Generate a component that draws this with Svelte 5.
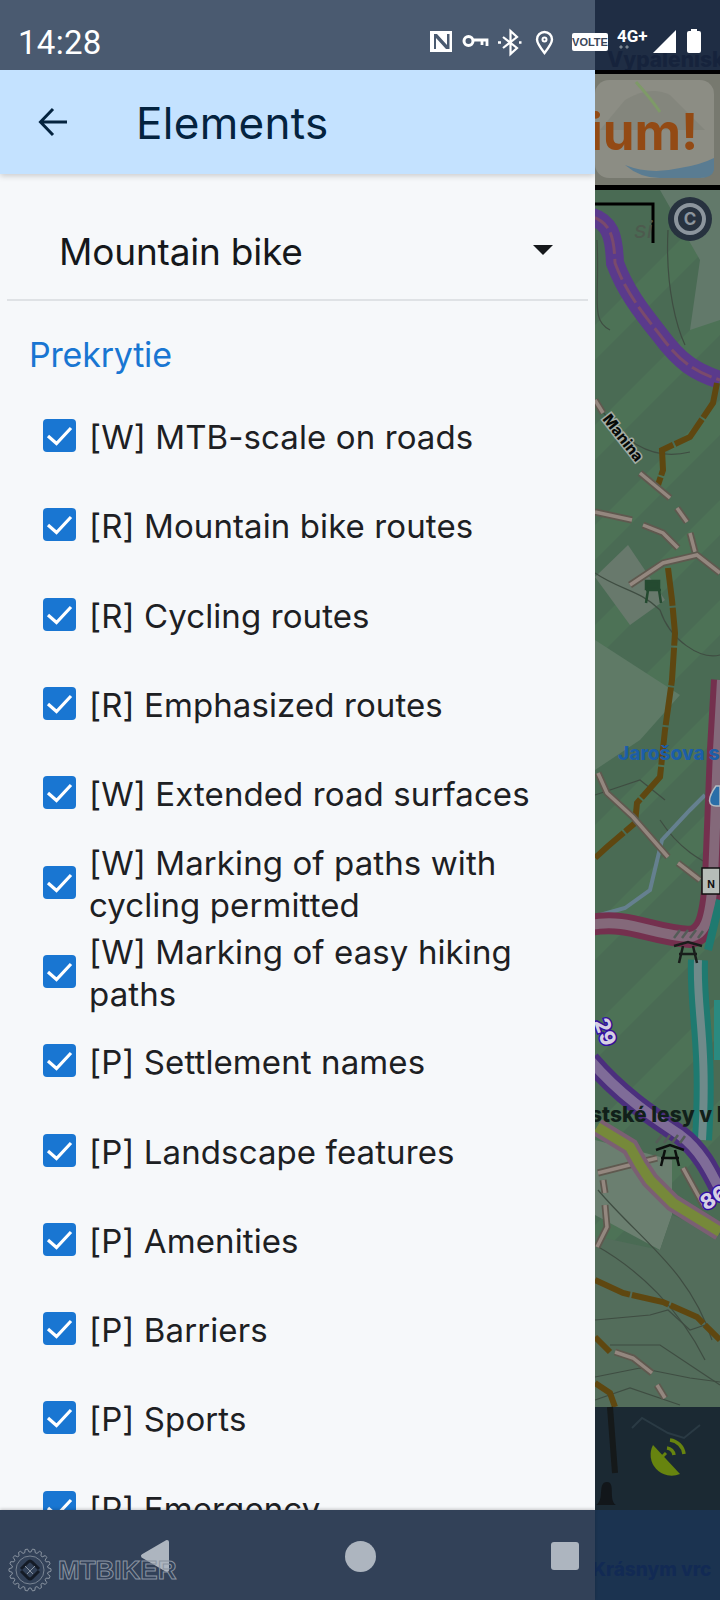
<script lang="ts">
	const items = [
		'[W] MTB-scale on roads',
		'[R] Mountain bike routes',
		'[R] Cycling routes',
		'[R] Emphasized routes',
		'[W] Extended road surfaces',
		'[W] Marking of paths with cycling permitted',
		'[W] Marking of easy hiking paths',
		'[P] Settlement names',
		'[P] Landscape features',
		'[P] Amenities',
		'[P] Barriers',
		'[P] Sports',
		'[P] Emergency'
	];

	const stripes = [200, 300, 400, 500, 600, 700, 800, 900, 1000, 1100];

	const tracks = [
		'M595 400 L603 413',
		'M640 473 L670 498',
		'M677 508 L687 522',
		'M690 533 L695 552',
		'M595 512 L632 520',
		'M643 525 L663 533 L678 548',
		'M630 585 L663 563 L697 555 L720 573',
		'M598 773 L607 793 L633 817 L668 857',
		'M678 863 L700 880',
		'M598 1173 L657 1158',
		'M603 1180 L605 1193',
		'M605 1205 L607 1227 L597 1247',
		'M615 1352 L633 1358 L652 1373',
		'M657 1385 L665 1398',
		'M683 1168 L705 1208'
	];

	const browns = [
		'M717 383 L713 403 L690 437 L662 450 L663 470 L658 485',
		'M668 568 L672 600 L675 633 L672 680 L665 730 L660 777 L637 803 L635 823 L607 847 L595 858',
		'M595 1280 L623 1293 L663 1302 L697 1317 L720 1340',
		'M595 1337 L610 1352',
		'M595 1383 L610 1393 L615 1407'
	];

	const contours = [
		'M595 400 C620 440 650 462 690 452',
		'M597 240 C600 300 590 320 610 330',
		'M668 230 C665 290 678 330 685 345',
		'M595 573 C620 590 640 590 660 610 C670 640 700 660 720 655',
		'M595 795 L610 790 L640 780 L665 800',
		'M660 820 C680 850 700 860 720 870',
		'M598 1190 C640 1240 690 1270 712 1340',
		'M595 1245 C640 1270 680 1310 705 1360',
		'M595 1320 L650 1315 L668 1310 L690 1330 L705 1325',
		'M610 1345 L660 1345 L720 1385',
		'M595 1377 L640 1368 L690 1378 L720 1382',
		'M595 1400 L630 1388 L680 1405'
	];

	// gear outline for the watermark
	function gearPath(cx: number, cy: number, outer: number, inner: number, teeth: number): string {
		const pts: string[] = [];
		const step = (Math.PI * 2) / teeth;
		for (let i = 0; i < teeth; i++) {
			const a = i * step;
			const seq: [number, number][] = [
				[inner, a - step * 0.36],
				[outer, a - step * 0.16],
				[outer, a + step * 0.16],
				[inner, a + step * 0.36]
			];
			for (const [r, t] of seq) {
				pts.push(`${(cx + r * Math.cos(t)).toFixed(1)} ${(cy + r * Math.sin(t)).toFixed(1)}`);
			}
		}
		return 'M' + pts.join(' L') + ' Z';
	}
</script>

<div class="screen">
	<svg class="map" viewBox="0 0 720 1600" width="720" height="1600">
		<rect width="720" height="1600" fill="#4a6b54" />
		{#each stripes as y}
			<path d="M590 {y + 130} L720 {y} L720 {y + 35} L590 {y + 165} Z" fill="#4d7256" />
		{/each}
		<path d="M660 190 L720 190 L720 320 L690 330 L700 260 Z" fill="#62796a" />
		<path d="M595 577 L628 545 L665 600 L630 625 Z" fill="#68796c" />
		<path d="M595 640 L680 695 L640 740 L595 770 Z" fill="#5f7a66" />
		<path d="M595 1140 L672 1160 L672 1215 L660 1250 L595 1215 Z" fill="#6b7f70" />
		<path d="M672 1215 L720 1235 L720 1410 L590 1410 L590 1235 L660 1250 Z" fill="#536d5b" />

		{#each contours as d}
			<path {d} fill="none" stroke="#3f4d42" stroke-width="1.2" />
		{/each}

		<rect width="720" height="70" fill="#1f2d44" />
		<text class="place-lg" x="607" y="67" fill="#16233c">Vypálenisko</text>
		<rect y="70" width="720" height="4" fill="#000" />
		<rect y="74" width="720" height="111" fill="#77796f" />
		<rect x="595" y="80" width="119" height="98" rx="14" fill="#8c8d84" />
		<path d="M625 100 Q650 85 670 95 L705 130 L600 130 Z" fill="#84867d" />
		<path d="M636 82 Q652 100 660 112" fill="none" stroke="#7e9a68" stroke-width="3" />
		<text class="ad" x="589" y="150" fill="#934a14">ium!</text>
		<path d="M625 165 Q650 175 680 168 Q700 165 714 158 V170 Q712 178 700 178 H660 Q640 178 625 165 Z" fill="#5a7c92" />
		<rect y="185" width="720" height="5" fill="#000" />
		<path d="M590 204 H653 V243" fill="none" stroke="#000" stroke-width="3" />
		<text class="faint" x="634" y="238" fill="#4d5a4e">si</text>
		<circle cx="690" cy="219" r="22" fill="#27323f" />
		<circle cx="690" cy="219" r="14" fill="none" stroke="#8c959d" stroke-width="4" />
		<text class="copy" x="690" y="225" text-anchor="middle" fill="#8c959d">C</text>

		<path d="M590 216 C610 222 614 235 615 263 C625 290 640 310 660 335 C680 362 695 372 720 380" fill="none" stroke="#5a3a8c" stroke-width="18" />
		<path d="M590 216 C610 222 614 235 615 263 C625 290 640 310 660 335 C680 362 695 372 720 380" fill="none" stroke="#7a4a6c" stroke-width="3" stroke-dasharray="22 5" />

		<path d="M600 915 L625 908 L650 890 L662 840 L690 810 L705 795" fill="none" stroke="#65808f" stroke-width="4" />

		{#each browns as d}
			<path {d} fill="none" stroke="#5f4710" stroke-width="6" stroke-dasharray="38 2" />
		{/each}
		{#each tracks as d}
			<path {d} fill="none" stroke="#5f594f" stroke-width="7" />
			<path {d} fill="none" stroke="#94877f" stroke-width="3.5" />
		{/each}

		<path d="M590 925 C630 918 650 935 690 937 C705 935 710 920 713 880 L718 750 L722 680" fill="none" stroke="#74304e" stroke-width="22" />
		<path d="M590 925 C630 918 650 935 690 937 C705 935 710 920 713 880 L718 750 L722 680" fill="none" stroke="#84697a" stroke-width="10" />
		<path d="M698 960 C696 1010 708 1040 702 1140" fill="none" stroke="#1f7a70" stroke-width="20" />
		<path d="M698 960 C696 1010 708 1040 702 1140" fill="none" stroke="#6f8a8a" stroke-width="8" />
		<path d="M708 950 L720 900" fill="none" stroke="#1f7a70" stroke-width="8" />
		<path d="M718 1000 V1060" fill="none" stroke="#2a8a80" stroke-width="8" />

		<path d="M590 1060 C620 1095 650 1115 680 1135 C700 1150 710 1170 720 1190" fill="none" stroke="#4b2f7d" stroke-width="20" />
		<path d="M590 1060 C620 1095 650 1115 680 1135 C700 1150 710 1170 720 1190" fill="none" stroke="#7f6c98" stroke-width="10" />
		<path d="M597 1127 L630 1147 L640 1165 L650 1180 L673 1203 L720 1232" fill="none" stroke="#7b5f73" stroke-width="18" />
		<path d="M597 1127 L630 1147 L640 1165 L650 1180 L673 1203 L720 1232" fill="none" stroke="#76893a" stroke-width="10" />

		<g transform="translate(623 438) rotate(52)">
			<text class="label" text-anchor="middle" y="5" fill="#070a08" stroke="#a3aca4" stroke-width="3">Manina</text>
		</g>
		<text class="place lake" x="618" y="760" fill="#1c5ea8">Jarošova s</text>
		<text class="place" x="590" y="1122" fill="#11201a">stské lesy v K</text>
		<g transform="translate(605 1032) rotate(70)">
			<text class="route" text-anchor="middle" y="7" fill="#d6d0e4" stroke="#3410a0" stroke-width="3">29</text>
		</g>
		<g transform="translate(714 1198) rotate(-30)">
			<text class="route" text-anchor="middle" y="7" fill="#d6d0e4" stroke="#3410a0" stroke-width="3">86</text>
		</g>

		<path d="M716 786 C706 800 709 806 716 806 L720 806 L720 786 Z" fill="#2a6ea8" stroke="#b4bcc2" stroke-width="1.5" />
		<rect x="702" y="868" width="18" height="26" fill="#b6bdb8" stroke="#111" stroke-width="1.5" />
		<text class="sign" x="711" y="888" text-anchor="middle" fill="#111">N</text>

		<g transform="translate(688 950)" fill="none" stroke="#191d1b" stroke-width="2.5">
			<path d="M-14 -4 L0 -8 L14 -4 M-9 4 H9 M-5 -4 L-9 13 M5 -4 L9 13" />
			<path d="M-14 -12 L-8 -20 M-6 -12 L0 -20 M2 -12 L8 -20 M10 -12 L15 -19" stroke="#545c58" />
		</g>
		<g transform="translate(670 1155)" fill="none" stroke="#0c0f0e" stroke-width="2.5">
			<path d="M-14 -5 L0 -10 L14 -5 M-9 3 H9 M-5 -5 L-9 11 M5 -5 L9 11" />
			<path d="M-14 -12 L-8 -20 M-6 -12 L0 -20 M2 -12 L8 -20 M10 -12 L15 -19" stroke="#545c58" />
		</g>
		<g transform="translate(654 592)" stroke="#244a30" stroke-width="2.5" fill="none">
			<rect x="-8" y="-11" width="13" height="8" fill="#244a30" />
			<path d="M-8 -2 H7 M-6 -2 L-8 11 M5 -2 L7 11" />
		</g>

		<rect y="1407" width="720" height="103" fill="#1b2933" />
		<path d="M610 1407 L615 1473" fill="none" stroke="#15191a" stroke-width="6" />
		<path d="M632 1428 L642 1418 L668 1433 L684 1438 L700 1425" fill="none" stroke="#2a3a44" stroke-width="2" />
		<path d="M607 1482 C597 1482 605 1500 596 1505 H616 C608 1500 616 1482 607 1482 Z" fill="#12161a" />
		<g transform="translate(668 1458)">
			<path d="M-15 -13 A21 21 0 0 0 12 16 Z" fill="#67840f" />
			<path d="M-2 -5 L-6 -1" stroke="#67840f" stroke-width="3" />
			<path d="M-1 -10 A8 8 0 0 1 6 -3 M2 -18 A16 16 0 0 1 16 -4" fill="none" stroke="#67840f" stroke-width="3.5" />
		</g>
		<rect y="1510" width="720" height="90" fill="#1b3350" />
		<text class="place lake" x="592" y="1576" fill="#122a54">Krásnym vrc</text>
	</svg>

	<div class="status">
		<span class="time">14:28</span>
		<svg class="status-icons" viewBox="0 0 300 40" width="300" height="40">
			<path fill-rule="evenodd" d="M10 5 H32 V26 H10 Z M14 8 H17 L27 19 V8 H29.5 V23 H26 L16 12 V23 H14 Z" fill="#fff" />
			<g fill="none" stroke="#fff" stroke-width="3">
				<circle cx="48.5" cy="15" r="4.5" />
				<path d="M54 14 H67 V20 M62 14 V19" stroke-width="2.8" />
				<path d="M83 11 L97 22 L90.5 28 V5 L97 11 L83 22" stroke-width="2.2" />
				<path d="M78 16.5 H81 M99 16.5 H101.5" stroke-width="2.5" />
				<path d="M124.5 27 C119 20 117 16 117 13.5 A7.5 7.5 0 0 1 132 13.5 C132 16 130 20 124.5 27 Z" stroke-width="2.4" />
				<circle cx="124.5" cy="13.5" r="2" stroke-width="2" />
			</g>
			<rect x="152" y="7" width="36" height="18" rx="2" fill="#fff" />
			<text class="volte" x="170" y="20" text-anchor="middle" fill="#3a4658">VOLTE</text>
			<text class="net" x="197" y="16" fill="#fff">4G+</text>
			<path d="M201 19 l2 2 l-2 2 l-2 -2 Z M207 19 l2 2 l-2 2 l-2 -2 Z" fill="#7a8590" />
			<path d="M233 27 H256 V4 Z" fill="#fff" />
			<path d="M267 7 a2 2 0 0 1 2 -2 h2 v-2 h6 v2 h2 a2 2 0 0 1 2 2 v18 a2 2 0 0 1 -2 2 h-10 a2 2 0 0 1 -2 -2 Z" fill="#fff" />
		</svg>
	</div>

	<aside class="drawer">
		<header class="appbar">
			<svg class="back" viewBox="0 0 30 30" width="30" height="30">
				<path d="M29 15 H3 M15 2 L2.5 15 L15 28" fill="none" stroke="#04233f" stroke-width="3" />
			</svg>
			<h1>Elements</h1>
		</header>

		<div class="select">
			<span>Mountain bike</span>
			<i class="caret"></i>
		</div>

		<h2>Prekrytie</h2>

		<ul>
			{#each items as item}
				<li>
					<span class="box">
						<svg viewBox="0 0 33 33" width="33" height="33">
							<path d="M5 17 L13.5 24.5 L28 9" fill="none" stroke="#fff" stroke-width="3.2" />
						</svg>
					</span>
					<span class="text">{item}</span>
				</li>
			{/each}
		</ul>
	</aside>

	<div class="navbar">
		<div class="nav-icons">
			<svg viewBox="0 0 32 34" width="32" height="34">
				<path d="M28 3 L4 17 L28 31 Z" fill="#adb5bf" stroke="#adb5bf" stroke-width="4" stroke-linejoin="round" />
			</svg>
			<span class="dot"></span>
			<span class="square"></span>
		</div>
		<div class="watermark">
			<svg viewBox="0 0 44 44" width="44" height="44">
				<path d={gearPath(22, 22, 21, 18, 18)} fill="none" stroke="#8a94a1" stroke-width="1" />
				<circle cx="22" cy="22" r="14" fill="none" stroke="#8a94a1" stroke-width="0.8" />
				<path d="M13 21 L20 14 Q22 12 24 14 L31 21 M31 23 L24 30 Q22 32 20 30 L13 23" fill="none" stroke="#141b26" stroke-width="3" />
				<path d="M17 18 L25 26 M27 18 L19 26" fill="none" stroke="#8a94a1" stroke-width="1" />
			</svg>
			<span>MTBIKER</span>
		</div>
	</div>
</div>

<style>
	:global(body) {
		margin: 0;
		background: #fff;
	}

	.screen {
		position: relative;
		width: 720px;
		height: 1600px;
		overflow: hidden;
		font-family: Inter, 'Noto Sans', sans-serif;
	}

	.map {
		position: absolute;
		top: 0;
		left: 0;
	}

	.map text {
		font-family: Inter, sans-serif;
		paint-order: stroke;
	}

	.place {
		font-size: 21px;
		font-weight: 800;
	}

	.place.lake {
		font-size: 19px;
	}

	.place-lg {
		font-size: 21px;
		font-weight: 800;
	}

	.faint {
		font-size: 24px;
		font-style: italic;
	}

	.ad {
		font-size: 51px;
		font-weight: 700;
	}

	.copy {
		font-size: 17px;
		font-weight: 700;
	}

	.label {
		font-size: 15px;
		font-weight: 800;
	}

	.route {
		font-size: 21px;
		font-weight: 800;
	}

	.sign {
		font-size: 10px;
		font-weight: 700;
	}

	.status {
		position: absolute;
		top: 0;
		left: 0;
		right: 0;
		height: 70px;
		display: flex;
		align-items: center;
		background: linear-gradient(to right, #4a5a70 595px, transparent 595px);
	}

	.time {
		margin-left: 18px;
		margin-top: 14px;
		color: #fff;
		font-size: 33px;
		line-height: 1;
		letter-spacing: 0.3px;
		font-family: Roboto, sans-serif;
	}

	.status-icons {
		position: absolute;
		left: 420px;
		top: 26px;
	}

	.volte {
		font-size: 11px;
		font-weight: 800;
		font-family: 'Liberation Sans', sans-serif;
	}

	.net {
		font-size: 17px;
		font-weight: 700;
		font-family: Roboto, sans-serif;
	}

	.drawer {
		position: absolute;
		top: 70px;
		left: 0;
		width: 595px;
		bottom: 0;
		background: #f6f8fa;
		overflow: hidden;
	}

	.appbar {
		height: 104px;
		display: flex;
		align-items: center;
		padding-left: 38px;
		background: #c4e2ff;
		box-shadow: 0 2px 6px rgba(0, 0, 0, 0.18);
	}

	.back {
		margin-right: 68px;
	}

	h1 {
		margin: 0;
		padding-top: 2px;
		font-size: 44px;
		font-weight: 400;
		color: #04233f;
		letter-spacing: 0.3px;
	}

	.select {
		display: flex;
		align-items: center;
		justify-content: space-between;
		margin: 0 7px;
		height: 125px;
		padding: 0 35px 0 52px;
		border-bottom: 2px solid #dfe2e5;
		box-sizing: content-box;
		color: #15181b;
		font-size: 37px;
		letter-spacing: -0.2px;
	}

	.select span {
		padding-top: 30px;
	}

	.caret {
		width: 0;
		height: 0;
		margin-top: 27px;
		border-left: 10px solid transparent;
		border-right: 10px solid transparent;
		border-top: 10px solid #15181b;
	}

	h2 {
		margin: 0;
		height: 90px;
		padding: 34px 0 0 29px;
		box-sizing: border-box;
		font-size: 34px;
		line-height: 40px;
		font-weight: 400;
		color: #1976d2;
		letter-spacing: -0.2px;
	}

	ul {
		margin: 0;
		padding: 0;
		list-style: none;
	}

	li {
		display: flex;
		align-items: center;
		height: 89.3px;
		padding: 0 30px 0 43px;
	}

	.box {
		flex: none;
		width: 33px;
		height: 33px;
		margin-right: 13px;
		border-radius: 4px;
		background: #1976d2;
	}

	.box svg {
		display: block;
	}

	.text {
		margin-top: 3px;
		font-size: 33px;
		line-height: 42px;
		letter-spacing: 0.1px;
		color: #1d2023;
	}

	.navbar {
		position: absolute;
		left: 0;
		bottom: 0;
		width: 595px;
		height: 90px;
		background: #324158;
		box-shadow: 0 -1px 3px rgba(0, 0, 0, 0.2);
	}

	.nav-icons {
		position: absolute;
		top: 29px;
		left: 139px;
		width: 440px;
		display: flex;
		align-items: center;
		justify-content: space-between;
	}

	.dot {
		width: 31px;
		height: 31px;
		border-radius: 50%;
		margin-left: -2px;
		background: #adb5bf;
	}

	.square {
		width: 28px;
		height: 28px;
		border-radius: 3px;
		background: #adb5bf;
	}

	.watermark {
		position: absolute;
		left: 8px;
		top: 38px;
		display: flex;
		align-items: center;
		gap: 6px;
	}

	.watermark span {
		font-size: 26px;
		font-weight: 700;
		color: transparent;
		-webkit-text-stroke: 1px #8a94a1;
		font-family: 'Liberation Sans', sans-serif;
	}
</style>
